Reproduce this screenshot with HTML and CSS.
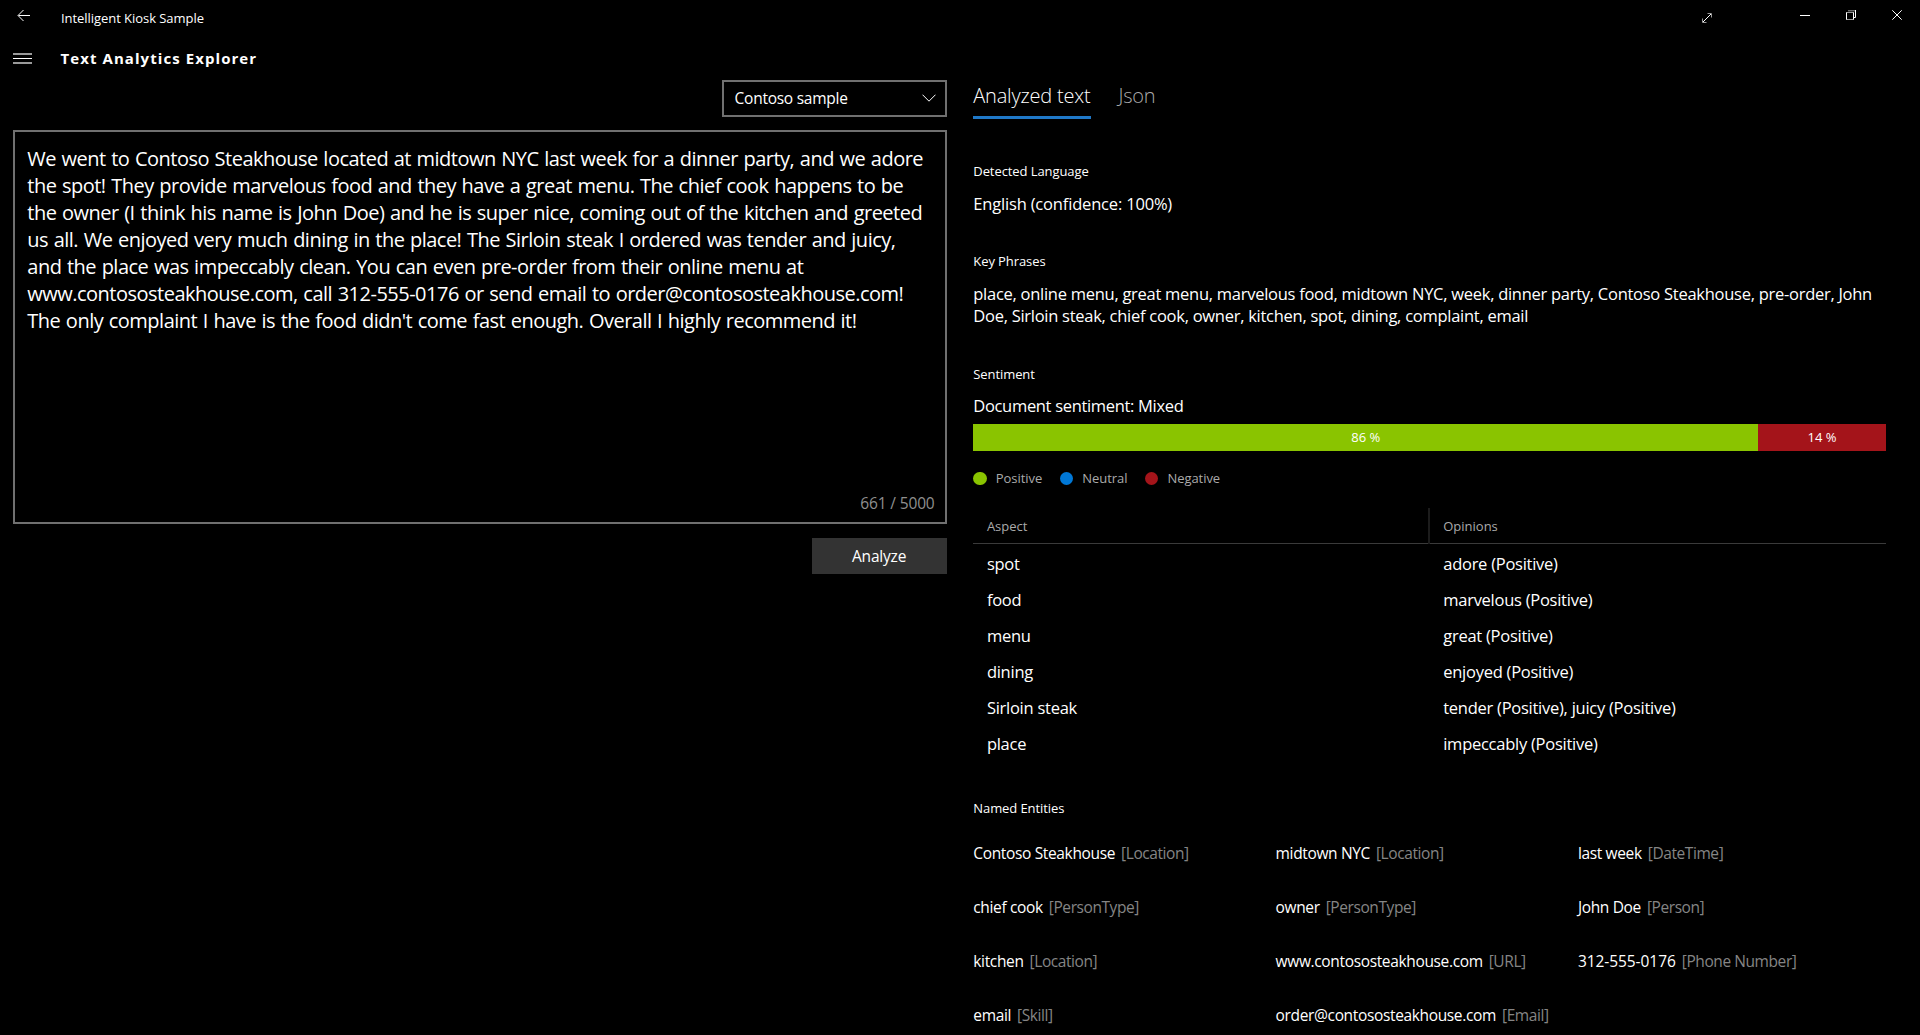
FILE: index.html
```
<!DOCTYPE html>
<html lang="en">
<head>
<meta charset="utf-8">
<title>Intelligent Kiosk Sample</title>
<link rel="stylesheet" href="styles.css">
</head>
<body>
<header class="titlebar">
  <svg class="back" width="14" height="13" viewBox="0 0 14 13"><path d="M13 6.5H1.5M6.5 1 1 6.5 6.5 12"/></svg>
  <span class="app-name">Intelligent Kiosk Sample</span>
  <div class="window-buttons">
    <svg class="expand" width="12" height="12" viewBox="0 0 12 12"><path d="M2 10 10 2"/><path class="dim" d="M6.5 1.5h4v4M1.500 6.500v4h4"/></svg>
    <svg class="minimize" width="12" height="12" viewBox="0 0 12 12"><path d="M1 6.500h10"/></svg>
    <svg class="restore" width="12" height="12" viewBox="0 0 12 12"><path d="M1.500 3.500h7v7h-7z"/><path class="dim" d="M3 1.800h7M2 3.500h6M2 10.500h6"/><path d="M10.500 1v7.500h-1.500"/></svg>
    <svg class="close" width="12" height="12" viewBox="0 0 12 12"><path d="M1.300 1.300l9.400 9.400M10.700 1.300l-9.400 9.400"/></svg>
  </div>
</header>
<div class="page-header">
  <svg class="menu" width="19" height="12" viewBox="0 0 19 12"><path class="dim" d="M0 2h19M0 11h19"/><path d="M0 6.500h19"/></svg>
  <h1 class="page-title">Text Analytics Explorer</h1>
</div>
<main class="content">
  <section class="input-pane">
    <div class="combo"><span>Contoso sample</span><svg width="14" height="8" viewBox="0 0 14 8"><path d="M.5.7 7 7.200 13.500.7"/></svg></div>
    <div class="editor">
      <p class="editor-text">We went to Contoso Steakhouse located at midtown NYC last week for a dinner party, and we adore<br>the spot! They provide marvelous food and they have a great menu. The chief cook happens to be<br>the owner (I think his name is John Doe) and he is super nice, coming out of the kitchen and greeted<br>us all. We enjoyed very much dining in the place! The Sirloin steak I ordered was tender and juicy,<br>and the place was impeccably clean. You can even pre-order from their online menu at<br>www.contososteakhouse.com, call 312-555-0176 or send email to order@contososteakhouse.com!<br>The only complaint I have is the food didn't come fast enough. Overall I highly recommend it!</p>
      <span class="count">661 / 5000</span>
    </div>
    <button class="analyze">Analyze</button>
  </section>
  <section class="results">
    <nav class="tabs"><span class="tab active">Analyzed text</span><span class="tab">Json</span></nav>
    <div class="block language">
      <h2 class="label">Detected Language</h2>
      <p class="value">English (confidence: 100%)</p>
    </div>
    <div class="block phrases">
      <h2 class="label">Key Phrases</h2>
      <p class="value">place, online menu, great menu, marvelous food, midtown NYC, week, dinner party, Contoso Steakhouse, pre-order, John<br>Doe, Sirloin steak, chief cook, owner, kitchen, spot, dining, complaint, email</p>
    </div>
    <div class="block sentiment">
      <h2 class="label">Sentiment</h2>
      <p class="value">Document sentiment: Mixed</p>
      <div class="bar"><div class="segment positive" style="width:86%">86 %</div><div class="segment negative" style="width:14%">14 %</div></div>
      <div class="legend">
        <span class="key"><i class="dot positive"></i>Positive</span>
        <span class="key"><i class="dot neutral"></i>Neutral</span>
        <span class="key"><i class="dot negative"></i>Negative</span>
      </div>
      <div class="table">
        <div class="row head"><span>Aspect</span><span>Opinions</span></div>
        <div class="row"><span>spot</span><span>adore (Positive)</span></div>
        <div class="row"><span>food</span><span>marvelous (Positive)</span></div>
        <div class="row"><span>menu</span><span>great (Positive)</span></div>
        <div class="row"><span>dining</span><span>enjoyed (Positive)</span></div>
        <div class="row"><span>Sirloin steak</span><span>tender (Positive), juicy (Positive)</span></div>
        <div class="row"><span>place</span><span>impeccably (Positive)</span></div>
      </div>
    </div>
    <div class="block entities">
      <h2 class="label">Named Entities</h2>
      <div class="entity-grid">
        <div class="entity">Contoso Steakhouse<span class="type">[Location]</span></div>
        <div class="entity">midtown NYC<span class="type">[Location]</span></div>
        <div class="entity">last week<span class="type">[DateTime]</span></div>
        <div class="entity">chief cook<span class="type">[PersonType]</span></div>
        <div class="entity">owner<span class="type">[PersonType]</span></div>
        <div class="entity">John Doe<span class="type">[Person]</span></div>
        <div class="entity">kitchen<span class="type">[Location]</span></div>
        <div class="entity">www.contososteakhouse.com<span class="type">[URL]</span></div>
        <div class="entity phone">312-555-0176<span class="type">[Phone Number]</span></div>
        <div class="entity">email<span class="type">[Skill]</span></div>
        <div class="entity">order@contososteakhouse.com<span class="type">[Email]</span></div>
      </div>
    </div>
  </section>
</main>
</body>
</html>
```
FILE: styles.css
```
* { box-sizing: border-box; margin: 0; padding: 0; }
html, body { height: 1035px; overflow: hidden; }
body {
  background: #000;
  color: #fff;
  font-family: "Open Sans", "Noto Sans", sans-serif;
  font-size: 16.5px;
  white-space: nowrap;
}
svg { display: block; fill: none; stroke: #fff; stroke-width: 1; flex: none; }
svg .dim { stroke: #999; }

.titlebar { display: flex; height: 36px; padding: 9px 17px 0; }
.app-name { margin-left: 30px; font-size: 13px; line-height: 18px; letter-spacing: -.05px; }
.window-buttons { display: flex; margin-left: auto; }
.expand { margin: 3px 86px 0 0; }
.minimize { margin-right: 34px; }
.restore { margin-right: 34px; }

.page-header { display: flex; align-items: center; height: 44px; padding-left: 13px; }
.menu .dim { stroke-width: 2; }
.page-title { margin-left: 28.500px; font-size: 15px; line-height: 20px; letter-spacing: 1.07px; }

.content { display: grid; grid-template-columns: 933.300px 912.700px; column-gap: 26.700px; padding-left: 13.300px; }

.input-pane { display: flex; flex-direction: column; align-items: flex-end; }
.combo {
  display: flex; align-items: center; justify-content: space-between;
  width: 225px; height: 37px; padding: 0 9px 1px 11px;
  border: 2px solid #707070;
  font-size: 15.500px; letter-spacing: -.26px;
}
.editor {
  display: flex; flex-direction: column; justify-content: space-between;
  width: 100%; height: 394px; margin-top: 13px; padding: 13.200px 10px 5.800px 12px;
  border: 2px solid #707070;
}
.editor-text { font-size: 20px; line-height: 26.980px; letter-spacing: -.51px; word-spacing: .9px; }
.count { align-self: flex-end; color: #8f8f8f; font-size: 15.500px; line-height: 26px; letter-spacing: -.14px; }
.analyze {
  width: 135px; height: 36px; margin-top: 13.600px;
  border: 0; background: #333; color: #fff;
  font: 15.500px "Open Sans", sans-serif; letter-spacing: -.2px;
}

.results { display: flex; flex-direction: column; }
.tabs { display: flex; gap: 27.500px; height: 39px; }
.tab { height: 39px; font-size: 20px; font-weight: 300; line-height: 32px; letter-spacing: -.2px; color: #aaa; }
.tab.active { width: 117.700px; color: #fff; border-bottom: 3px solid #1f78c8; }

.label { font-size: 13px; font-weight: 400; line-height: 20px; letter-spacing: -.08px; }
.value { line-height: 22.400px; letter-spacing: -.27px; }
.language { margin-top: 42px; }
.language .value { letter-spacing: -.18px; }
.phrases { margin-top: 36px; }
.sentiment { margin-top: 36.200px; }
.label + .value { margin-top: 11.600px; }
.sentiment .value { letter-spacing: -.32px; }
.entities { margin-top: 36.200px; }

.bar { display: flex; height: 27px; margin-top: 6.300px; }
.segment { display: flex; align-items: center; justify-content: center; font-size: 13px; }
.positive { background: #8ac400; }
.neutral { background: #0078d7; }
.negative { background: #a4141a; }
.legend { display: flex; gap: 17.500px; height: 20px; margin-top: 17.500px; color: #aaa; font-size: 13px; line-height: 20px; letter-spacing: -.05px; }
.key { display: flex; align-items: center; }
.dot { width: 13.500px; height: 13.500px; margin-right: 9px; border-radius: 50%; }

.table { margin-top: 19.500px; }
.row { display: grid; grid-template-columns: 1fr 1fr; height: 36px; line-height: 36px; letter-spacing: -.26px; }
.row span { padding-left: 13.600px; }
.head { border-bottom: 1px solid #3a3a3a; margin-bottom: 1.700px; color: #aaa; font-size: 13px; letter-spacing: 0; }
.head span:first-child { border-right: 2px solid #1c1c1c; }

.entity-grid { display: grid; grid-template-columns: repeat(3, 302.300px); grid-auto-rows: 54px; margin-top: 8.400px; }
.entity { font-size: 15.500px; line-height: 54px; letter-spacing: -.35px; }
.entity.phone { letter-spacing: -.06px; }
.type { margin-left: 6px; color: #858585; letter-spacing: -.42px; }
```
